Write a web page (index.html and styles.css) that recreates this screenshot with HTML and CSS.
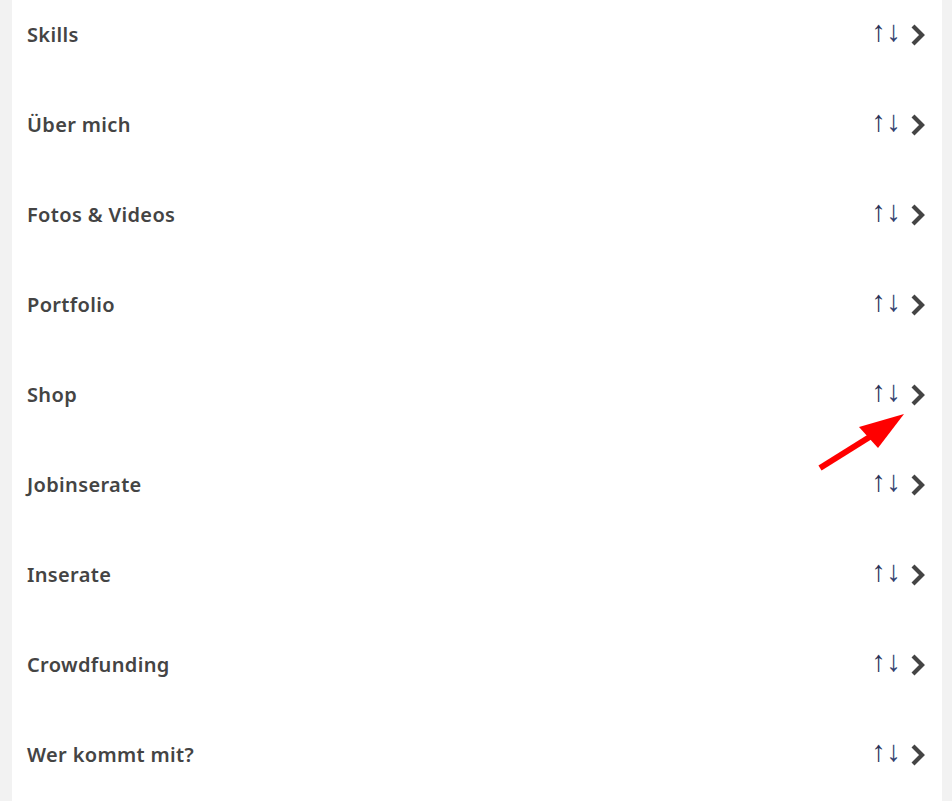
FILE: index.html
```html
<!DOCTYPE html>
<html lang="de">
<head>
<meta charset="utf-8">
<title>Menü</title>
<link rel="stylesheet" href="styles.css">
</head>
<body>
<div class="panel">
  <ul class="list">
    <li class="row"><span class="label">Skills</span><span class="actions"><span class="sort"><span class="up">↑</span><span class="down">↓</span></span><svg class="chev" viewBox="0 0 16 22" width="16" height="22"><path d="M3 2 L12 11 L3 20" /></svg></span></li>
    <li class="row"><span class="label">Über mich</span><span class="actions"><span class="sort"><span class="up">↑</span><span class="down">↓</span></span><svg class="chev" viewBox="0 0 16 22" width="16" height="22"><path d="M3 2 L12 11 L3 20" /></svg></span></li>
    <li class="row"><span class="label">Fotos &amp; Videos</span><span class="actions"><span class="sort"><span class="up">↑</span><span class="down">↓</span></span><svg class="chev" viewBox="0 0 16 22" width="16" height="22"><path d="M3 2 L12 11 L3 20" /></svg></span></li>
    <li class="row"><span class="label">Portfolio</span><span class="actions"><span class="sort"><span class="up">↑</span><span class="down">↓</span></span><svg class="chev" viewBox="0 0 16 22" width="16" height="22"><path d="M3 2 L12 11 L3 20" /></svg></span></li>
    <li class="row"><span class="label">Shop</span><span class="actions"><span class="sort"><span class="up">↑</span><span class="down">↓</span></span><svg class="chev" viewBox="0 0 16 22" width="16" height="22"><path d="M3 2 L12 11 L3 20" /></svg></span></li>
    <li class="row"><span class="label">Jobinserate</span><span class="actions"><span class="sort"><span class="up">↑</span><span class="down">↓</span></span><svg class="chev" viewBox="0 0 16 22" width="16" height="22"><path d="M3 2 L12 11 L3 20" /></svg></span></li>
    <li class="row"><span class="label">Inserate</span><span class="actions"><span class="sort"><span class="up">↑</span><span class="down">↓</span></span><svg class="chev" viewBox="0 0 16 22" width="16" height="22"><path d="M3 2 L12 11 L3 20" /></svg></span></li>
    <li class="row"><span class="label">Crowdfunding</span><span class="actions"><span class="sort"><span class="up">↑</span><span class="down">↓</span></span><svg class="chev" viewBox="0 0 16 22" width="16" height="22"><path d="M3 2 L12 11 L3 20" /></svg></span></li>
    <li class="row"><span class="label">Wer kommt mit?</span><span class="actions"><span class="sort"><span class="up">↑</span><span class="down">↓</span></span><svg class="chev" viewBox="0 0 16 22" width="16" height="22"><path d="M3 2 L12 11 L3 20" /></svg></span></li>
  </ul>
</div>
<svg class="pointer" width="110" height="70" viewBox="0 0 110 70">
  <line x1="4" y1="62" x2="60" y2="27" stroke="#f00" stroke-width="6"/>
  <polygon points="88,8 43,21 62,42" fill="#f00"/>
</svg>
</body>
</html>
```
FILE: styles.css
```css
html, body {
  margin: 0;
  padding: 0;
  height: 100%;
  overflow: hidden;
}
body {
  background: #f2f2f2;
  font-family: "Noto Sans", "DejaVu Sans", sans-serif;
  position: relative;
}
.panel {
  margin: 0 10px 0 12px;
  background: #fff;
  height: 100%;
}
.list {
  list-style: none;
  margin: 0;
  padding: 0;
}
.row {
  display: flex;
  align-items: center;
  justify-content: space-between;
  height: 69px;
  padding: 0 16px 21px 15px;
}
.label {
  font-size: 20px;
  font-weight: 600;
  letter-spacing: 0.35px;
  color: #444;
}
.actions {
  display: flex;
  align-items: center;
  gap: 9px;
}
.sort {
  display: flex;
  font-family: "Liberation Sans", Arial, sans-serif;
  font-size: 29px;
  line-height: 1;
  color: #2a3158;
  margin-top: -7px;
}
.up, .down {
  display: inline-block;
  width: 15px;
  text-align: center;
}
.down {
  color: #34426e;
}
.chev {
  display: block;
}
.chev path {
  fill: none;
  stroke: #444;
  stroke-width: 4.2;
}
.pointer {
  position: absolute;
  left: 816px;
  top: 406px;
}
```
